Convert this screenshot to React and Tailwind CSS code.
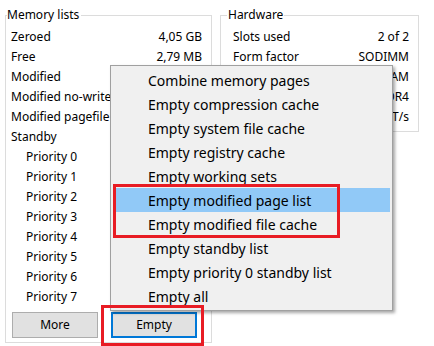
import React from 'react';

const memoryRows = [
    { label: 'Zeroed', value: '4,05 GB' },
    { label: 'Free', value: '2,79 MB' },
    { label: 'Modified', value: '' },
    { label: 'Modified no-write', value: '' },
    { label: 'Modified pagefile', value: '' },
    { label: 'Standby', value: '' },
    { label: 'Priority 0', value: '', sub: true },
    { label: 'Priority 1', value: '', sub: true },
    { label: 'Priority 2', value: '', sub: true },
    { label: 'Priority 3', value: '', sub: true },
    { label: 'Priority 4', value: '', sub: true },
    { label: 'Priority 5', value: '', sub: true },
    { label: 'Priority 6', value: '', sub: true },
    { label: 'Priority 7', value: '', sub: true },
];

// rows 3-5 sit under the context menu; only the value tails show
const hardwareRows = [
    { label: 'Slots used', value: '2 of 2' },
    { label: 'Form factor', value: 'SODIMM' },
    { label: '', value: 'DRAM' },
    { label: '', value: 'DDR4' },
    { label: '', value: '2667 MT/s' },
];

const menuItems = [
    'Combine memory pages',
    'Empty compression cache',
    'Empty system file cache',
    'Empty registry cache',
    'Empty working sets',
    'Empty modified page list',
    'Empty modified file cache',
    'Empty standby list',
    'Empty priority 0 standby list',
    'Empty all',
];

export default function App() {
    return (
        <div className="relative w-[434px] h-[346px] overflow-hidden bg-white text-black font-['Segoe_UI','Noto_Sans',sans-serif] text-[12px] leading-[16px]">
            <div className="flex items-start pt-[7px] pl-[5px] gap-[8px]">
                {/* Memory lists */}
                <fieldset className="w-[207px] h-[336px] border border-[#dcdcdc] px-0 pb-0">
                    <legend className="ml-[1px] pr-[2px]">Memory lists</legend>
                    <div className="mt-[4px] pl-[5px] pr-[9px]">
                        {memoryRows.map(r => (
                            <div key={r.label} className={`flex justify-between items-center h-[20px] ${r.sub ? 'pl-[15px]' : ''}`}>
                                <span>{r.label}</span>
                                {r.value && <span>{r.value}</span>}
                            </div>
                        ))}
                    </div>
                    <div className="flex gap-[13px] mt-[5px] ml-[6px]">
                        <button className="w-[86px] h-[26px] bg-[#e1e1e1] border border-[#adadad]">More</button>
                        <button className="w-[86px] h-[26px] bg-[#e1e1e1] border-2 border-[#0078d7]">Empty</button>
                    </div>
                </fieldset>

                {/* Hardware */}
                <fieldset className="w-[199px] h-[125px] border border-[#dcdcdc] px-0 pb-0">
                    <legend className="ml-[6px] px-[1px]">Hardware</legend>
                    <div className="mt-[4px] pl-[12px] pr-[9px]">
                        {hardwareRows.map((r, i) => (
                            <div key={i} className="flex justify-between items-center h-[20px]">
                                <span>{r.label}</span>
                                <span>{r.value}</span>
                            </div>
                        ))}
                    </div>
                </fieldset>
            </div>

            {/* context menu */}
            <div className="absolute left-[110px] top-[65px] w-[283px] bg-[#f0f0f0] border border-[#a0a0a0] p-[2px] shadow-[2px_2px_3px_rgba(0,0,0,0.35)] text-[14px]">
                {menuItems.map((item, i) => (
                    <div key={item} className={`h-[24px] flex items-center pl-[35px] pt-[1px] ${i === 5 ? 'bg-[#91c9f7]' : ''}`}>
                        {item}
                    </div>
                ))}
            </div>

            {/* red highlight boxes */}
            <div className="absolute left-[113px] top-[184px] w-[227px] h-[54px] border-[3px] border-[#e81c24]" />
            <div className="absolute left-[101px] top-[305px] w-[103px] h-[41px] border-[3px] border-[#e81c24]" />
        </div>
    );
}
